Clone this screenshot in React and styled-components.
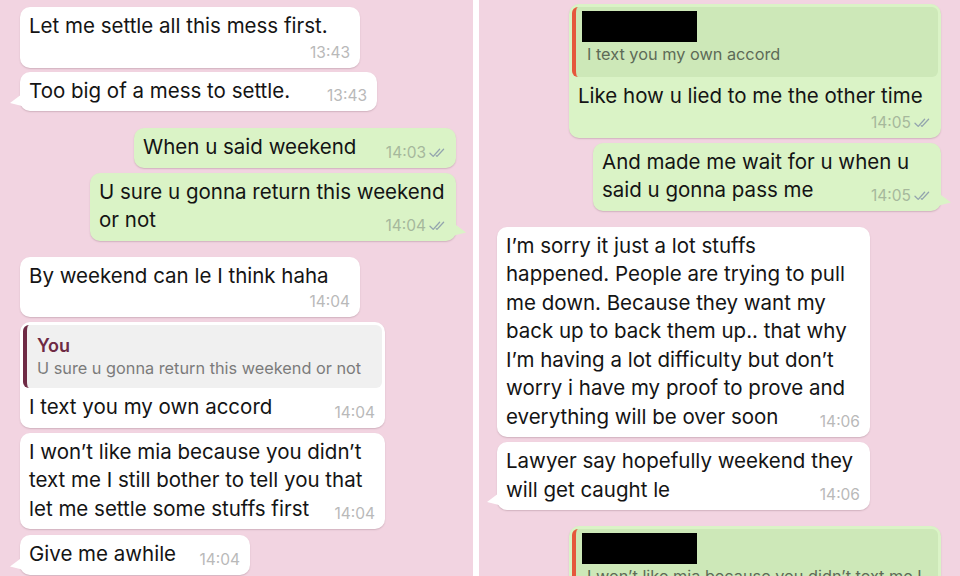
import React from "react";
import styled, { createGlobalStyle, css } from "styled-components";

const GlobalStyle = createGlobalStyle`
  html, body {
    margin: 0;
    padding: 0;
    background: #ffffff;
  }
  body {
    font-family: Inter, "Liberation Sans", sans-serif;
    -webkit-font-smoothing: antialiased;
  }
`;

const Page = styled.div`
  display: grid;
  grid-template-columns: 473px 6px 1fr;
  width: 960px;
  height: 576px;
  overflow: hidden;
  background: #ffffff;
`;

const Panel = styled.div`
  display: flex;
  flex-direction: column;
  background: #f2d4e1;
  overflow: hidden;
  padding: ${p => p.$pad};
`;

const Divider = styled.div`
  background: #ffffff;
`;

const tailIn = css`
  &::before {
    content: "";
    position: absolute;
    left: -10px;
    bottom: 5px;
    width: 12px;
    height: 12px;
    background: inherit;
    clip-path: polygon(100% 0, 100% 100%, 0 75%);
  }
`;

const tailOut = css`
  &::after {
    content: "";
    position: absolute;
    right: -10px;
    bottom: 5px;
    width: 12px;
    height: 12px;
    background: inherit;
    clip-path: polygon(0 0, 0 100%, 100% 75%);
  }
`;

const Bubble = styled.div`
  position: relative;
  width: ${p => p.$w}px;
  margin-top: ${p => p.$mt}px;
  align-self: ${p => (p.$out ? "flex-end" : "flex-start")};
  background: ${p => (p.$out ? "#daf3c6" : "#ffffff")};
  border-radius: 10px;
  box-shadow: 0 1px 1.5px rgba(90, 60, 70, 0.22);
  flex-shrink: 0;
  ${p => p.$tail && (p.$out ? tailOut : tailIn)}
`;

const Body = styled.div`
  padding: 5px 10px 6px 9px;
  color: #141414;
  font-size: 20.5px;
  line-height: 28.5px;
`;

const Line = styled.div`
  white-space: pre;
`;

const LastRow = styled.div`
  display: flex;
  align-items: flex-end;
  justify-content: space-between;
`;

const MetaRow = styled.div`
  display: flex;
  justify-content: flex-end;
  margin-top: ${p => p.$mt}px;
`;

const Meta = styled.span`
  display: inline-flex;
  align-items: center;
  gap: 3px;
  height: 18px;
  line-height: 18px;
  font-size: 15.5px;
  color: ${p => (p.$out ? "#a6b89c" : "#b9b9b9")};
  padding-left: 14px;
  white-space: nowrap;
`;

const Quote = styled.div`
  margin: 3px 3px 0;
  border-radius: 6px;
  border-left: 4px solid ${p => p.$bar};
  background: ${p => p.$bg};
  padding: ${p => p.$pad};
  overflow: hidden;
`;

const QuoteName = styled.div`
  font-size: 18px;
  line-height: 22px;
  font-weight: 600;
  color: #6e2a44;
`;

const QuoteText = styled.div`
  font-size: 16.3px;
  line-height: 22px;
  color: ${p => p.$color};
  white-space: pre;
`;

const Redact = styled.div`
  width: 115px;
  height: 31px;
  margin-left: -5px;
  margin-bottom: 1px;
  background: #000000;
`;

const Checks = () => (
  <svg width="17" height="10" viewBox="0 0 17 10" fill="none">
    <path d="M1 5.2 L4.2 8.4 L10.6 1.2" stroke="#93a4ae" strokeWidth="1.3" strokeLinecap="round" strokeLinejoin="round" />
    <path d="M7.2 7.6 L8 8.4 L14.6 1.2" stroke="#93a4ae" strokeWidth="1.3" strokeLinecap="round" strokeLinejoin="round" />
  </svg>
);

const Message = ({ lines, time, out, stacked, w, mt, tail, quote }) => {
  const meta = (
    <Meta $out={out}>
      {time}
      {out && <Checks />}
    </Meta>
  );
  const head = stacked ? lines : lines.slice(0, -1);
  const last = lines[lines.length - 1];
  return (
    <Bubble $out={out} $w={w} $mt={mt} $tail={tail}>
      {quote}
      <Body>
        {head.map((l, i) => (
          <Line key={i}>{l}</Line>
        ))}
        {stacked ? (
          <MetaRow $mt={3}>{meta}</MetaRow>
        ) : (
          <LastRow>
            <Line>{last}</Line>
            {meta}
          </LastRow>
        )}
      </Body>
    </Bubble>
  );
};

const YouQuote = () => (
  <Quote $bar="#6e2a44" $bg="#f0f0f0" $pad="10px 10px 9px 10px">
    <QuoteName>You</QuoteName>
    <QuoteText $color="#7b7b7b">U sure u gonna return this weekend or not</QuoteText>
  </Quote>
);

const HiddenQuote = ({ text }) => (
  <Quote $bar="#e5573c" $bg="#cde8b8" $pad="4px 10px 12px 11px">
    <Redact />
    <QuoteText $color="#5d6b57">{text}</QuoteText>
  </Quote>
);

export default function App() {
  return (
    <>
      <GlobalStyle />
      <Page>
        <Panel $pad="0 17px 0 20px">
          <Message mt={7} w={340} stacked time="13:43" lines={["Let me settle all this mess first."]} />
          <Message mt={4} w={357} tail time="13:43" lines={["Too big of a mess to settle."]} />
          <Message mt={17} w={322} out time="14:03" lines={["When u said weekend"]} />
          <Message mt={5} w={366} out tail time="14:04" lines={["U sure u gonna return this weekend", "or not"]} />
          <Message mt={16} w={340} stacked time="14:04" lines={["By weekend can le I think haha"]} />
          <Message mt={5} w={365} time="14:04" quote={<YouQuote />} lines={["I text you my own accord"]} />
          <Message
            mt={5}
            w={365}
            time="14:04"
            lines={["I won\u2019t like mia because you didn\u2019t", "text me I still bother to tell you that", "let me settle some stuffs first"]}
          />
          <Message mt={6} w={230} tail time="14:04" lines={["Give me awhile"]} />
        </Panel>
        <Divider />
        <Panel $pad="0 19px 0 18px">
          <Message
            mt={4}
            w={372}
            out
            stacked
            time="14:05"
            quote={<HiddenQuote text="I text you my own accord" />}
            lines={["Like how u lied to me the other time"]}
          />
          <Message mt={5} w={348} out tail time="14:05" lines={["And made me wait for u when u", "said u gonna pass me"]} />
          <Message
            mt={16}
            w={373}
            time="14:06"
            lines={[
              "I\u2019m sorry it just a lot stuffs",
              "happened. People are trying to pull",
              "me down. Because they want my",
              "back up to back them up.. that why",
              "I\u2019m having a lot difficulty but don\u2019t",
              "worry i have my proof to prove and",
              "everything will be over soon"
            ]}
          />
          <Message mt={5} w={373} tail time="14:06" lines={["Lawyer say hopefully weekend they", "will get caught le"]} />
          <Message
            mt={16}
            w={372}
            out
            stacked
            time="14:06"
            quote={<HiddenQuote text={"I won\u2019t like mia because you didn\u2019t text me I"} />}
            lines={["Ok"]}
          />
        </Panel>
      </Page>
    </>
  );
}
